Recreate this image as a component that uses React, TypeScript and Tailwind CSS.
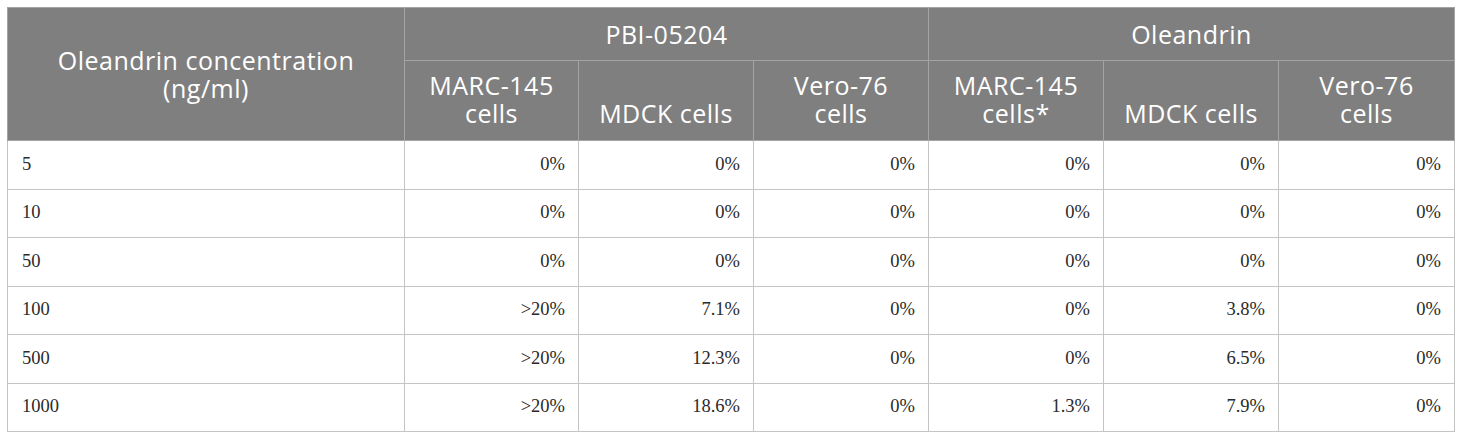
import React from 'react';

const rows = [
  ['5', '0%', '0%', '0%', '0%', '0%', '0%'],
  ['10', '0%', '0%', '0%', '0%', '0%', '0%'],
  ['50', '0%', '0%', '0%', '0%', '0%', '0%'],
  ['100', '>20%', '7.1%', '0%', '0%', '3.8%', '0%'],
  ['500', '>20%', '12.3%', '0%', '0%', '6.5%', '0%'],
  ['1000', '>20%', '18.6%', '0%', '1.3%', '7.9%', '0%'],
];

const sub = [
  ['MARC-145', 'cells'],
  ['MDCK cells'],
  ['Vero-76', 'cells'],
  ['MARC-145', 'cells*'],
  ['MDCK cells'],
  ['Vero-76', 'cells'],
];

export default function App() {
  return (
    <div className="bg-white w-[1460px] h-[438px] pt-[7px] pl-[7px]">
      <table className="table-fixed border-collapse w-[1447px] border border-[#c4c4c4]">
        <colgroup>
          <col className="w-[397px]" />
          <col className="w-[174px]" />
          <col className="w-[175px]" />
          <col className="w-[175px]" />
          <col className="w-[175px]" />
          <col className="w-[175px]" />
          <col className="w-[176px]" />
        </colgroup>
        <thead className="bg-[#7f7f7f] text-white font-['Open_Sans',sans-serif] text-[25px] tracking-[0.5px] leading-[28px]">
          <tr className="h-[53px]">
            <th rowSpan={2} className="font-normal border border-[#a3a3a3] px-3 text-center align-middle">
              <div>Oleandrin concentration</div>
              <div>(ng/ml)</div>
            </th>
            <th colSpan={3} className="font-normal border border-[#a3a3a3] text-center">PBI-05204</th>
            <th colSpan={3} className="font-normal border border-[#a3a3a3] text-center">Oleandrin</th>
          </tr>
          <tr className="h-[80px]">
            {sub.map((s, i) => (
              <th key={i} className="font-normal border border-[#a3a3a3] text-center align-bottom pb-[13px] px-2">
                {s.map((line, j) => (
                  <div key={j}>{line}</div>
                ))}
              </th>
            ))}
          </tr>
        </thead>
        <tbody className="font-['Liberation_Serif',serif] text-[18.5px] text-[#2a2a2a]">
          {rows.map((r, i) => (
            <tr key={i} className="h-[48.5px]">
              {r.map((c, j) => (
                <td
                  key={j}
                  className={`border border-[#c4c4c4] ${j === 0 ? 'text-left pl-[14px]' : 'text-right pr-[13px]'}`}
                >
                  {c}
                </td>
              ))}
            </tr>
          ))}
        </tbody>
      </table>
    </div>
  );
}
